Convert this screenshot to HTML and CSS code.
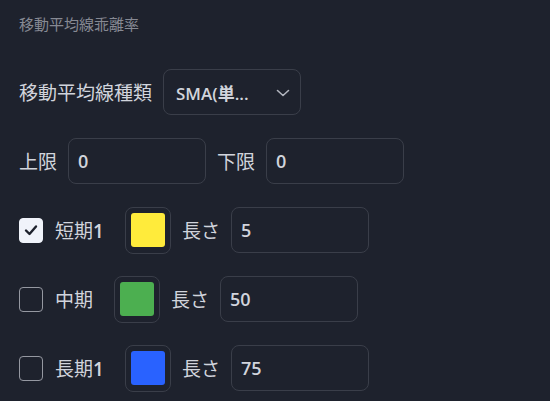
FILE: index.html
```html
<!DOCTYPE html>
<html lang="ja">
<head>
    <meta charset="UTF-8">
    <meta name="viewport" content="width=device-width, initial-scale=1.0">
    <title>移動平均線乖離率</title>
    <link rel="stylesheet" href="styles.css">
</head>
<body>
    <div class="panel">
        <div class="title">移動平均線乖離率</div>

        <div class="row">
            <span class="label">移動平均線種類</span>
            <div class="select">
                <span>SMA(単...</span>
                <svg class="chevron" width="14" height="8" viewBox="0 0 14 8">
                    <path d="M1.5 1.5 L7 6.5 L12.5 1.5" fill="none" stroke="#b2b5be" stroke-width="1.6" stroke-linecap="round" stroke-linejoin="round"/>
                </svg>
            </div>
        </div>

        <div class="row">
            <span class="label">上限</span>
            <div class="input">0</div>
            <span class="label">下限</span>
            <div class="input">0</div>
        </div>

        <div class="row">
            <span class="check checked">
                <svg width="14" height="12" viewBox="0 0 14 12">
                    <path d="M2 6.5 L5.5 10 L12 2.5" fill="none" stroke="#1e222d" stroke-width="2.4" stroke-linecap="round" stroke-linejoin="round"/>
                </svg>
            </span>
            <span class="label line-name">短期<b>1</b></span>
            <span class="swatch"><span class="color yellow"></span></span>
            <span class="label">長さ</span>
            <div class="input">5</div>
        </div>

        <div class="row">
            <span class="check"></span>
            <span class="label line-name">中期</span>
            <span class="swatch"><span class="color green"></span></span>
            <span class="label">長さ</span>
            <div class="input">50</div>
        </div>

        <div class="row">
            <span class="check"></span>
            <span class="label line-name">長期<b>1</b></span>
            <span class="swatch"><span class="color blue"></span></span>
            <span class="label">長さ</span>
            <div class="input">75</div>
        </div>
    </div>
</body>
</html>
```

FILE: styles.css
```css
body{
    margin: 0;
    padding: 0;
    background-color: #1e222d;
    color: #d1d4dc;
    font-family: "Open Sans", "Noto Sans CJK JP", sans-serif;
}

.panel{
    padding: 14px 0 0 19px;
}

.title{
    font-size: 15px;
    color: #868993;
    height: 20px;
    line-height: 20px;
    margin-bottom: 35px;
}

.row{
    display: flex;
    align-items: center;
    gap: 11px;
    height: 46px;
    margin-bottom: 23px;
}

.label{
    font-size: 19px;
    white-space: nowrap;
}

.label b{
    font-weight: 600;
}

.line-name{
    margin-left: 1px;
    margin-right: 10px;
}

.select, .input{
    box-sizing: border-box;
    height: 46px;
    border: 1px solid #3a3e49;
    border-radius: 8px;
    display: flex;
    align-items: center;
    font-weight: 600;
}

.select{
    width: 138px;
    padding: 0 10px 0 12px;
    justify-content: space-between;
    font-size: 17px;
}

.chevron{
    margin-top: 1px;
}

.input{
    width: 138px;
    padding-left: 9px;
    font-size: 18px;
}

.check{
    box-sizing: border-box;
    width: 24px;
    height: 25px;
    border: 1.5px solid #9598a1;
    border-radius: 4px;
    display: flex;
    align-items: center;
    justify-content: center;
}

.check.checked{
    background-color: #f0f3fa;
    border-color: #f0f3fa;
}

.swatch{
    box-sizing: border-box;
    width: 46px;
    height: 47px;
    border: 1px solid #3a3e49;
    border-radius: 8px;
    display: flex;
    align-items: center;
    justify-content: center;
}

.color{
    width: 34px;
    height: 34px;
    border-radius: 3px;
}

.yellow{
    background-color: #ffeb3b;
}
.green{
    background-color: #4caf50;
}
.blue{
    background-color: #2962ff;
}
```
